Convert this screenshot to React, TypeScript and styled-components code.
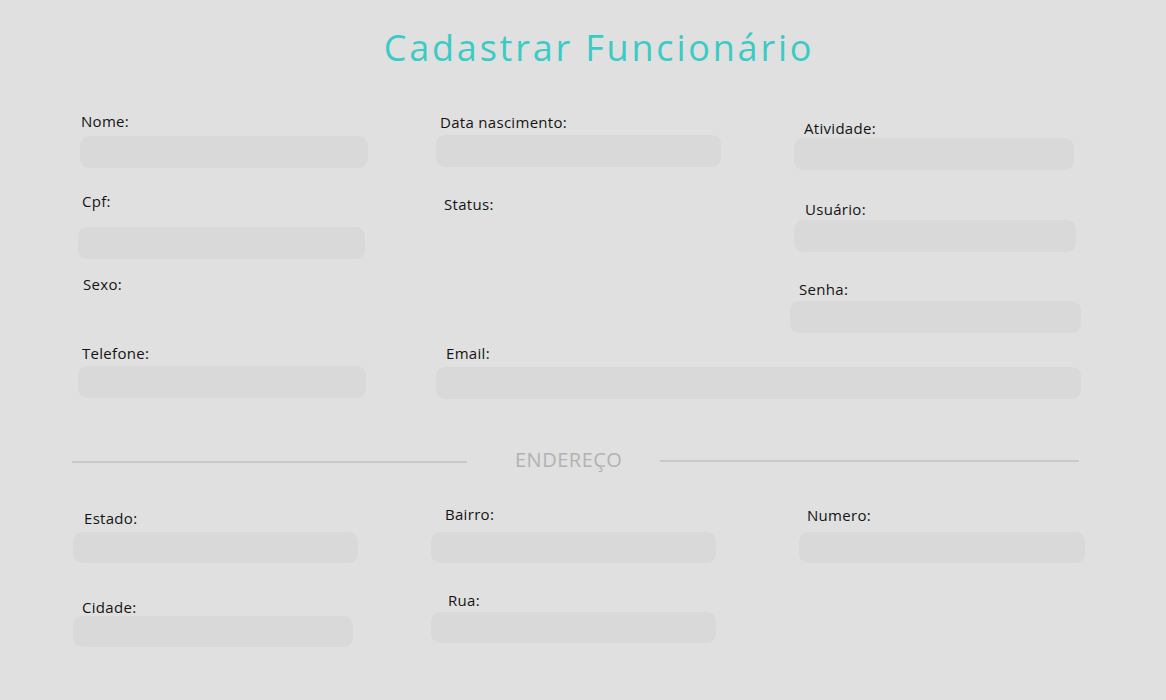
import React from "react";
import styled, { createGlobalStyle } from "styled-components";

const Global = createGlobalStyle`
  html, body { margin: 0; padding: 0; background: #e0e0e0; }
  body { font-family: "Open Sans", "Liberation Sans", sans-serif; }
  * { box-sizing: border-box; }
`;

const Page = styled.div`
  width: 1166px;
  height: 700px;
  background: #e0e0e0;
  overflow: hidden;
`;

const Header = styled.header`
  height: 113px;
  display: flex;
  justify-content: center;
  padding-left: 32px;
  padding-top: 26px;
`;

const Title = styled.h1`
  margin: 0;
  font-family: "Open Sans", sans-serif;
  font-weight: 400;
  font-size: 36px;
  line-height: 44px;
  letter-spacing: 2.8px;
  color: #3bcbc6;
`;

const Form = styled.form`
  padding-left: 72px;
  display: flex;
  flex-direction: column;
`;

const Grid = styled.div<{ $mt?: number; $h?: number }>`
  display: grid;
  grid-template-columns: 358px 356px 1fr;
  align-items: start;
  margin-top: ${(p) => p.$mt ?? 0}px;
  height: ${(p) => (p.$h ? `${p.$h}px` : "auto")};
`;

const Column = styled.div`
  display: flex;
  flex-direction: column;
  align-items: flex-start;
`;

const FieldBox = styled.div<{ $mt: number; $span?: boolean }>`
  display: flex;
  flex-direction: column;
  align-items: flex-start;
  margin-top: ${(p) => p.$mt}px;
  grid-column: ${(p) => (p.$span ? "2 / 4" : "auto")};
`;

const Label = styled.label<{ $x: number }>`
  margin-left: ${(p) => p.$x}px;
  font-size: 15px;
  line-height: 16px;
  height: 16px;
  letter-spacing: 0.3px;
  color: #141414;
  white-space: nowrap;
`;

const Input = styled.input<{ $x: number; $w: number; $gap: number; $h: number }>`
  margin-left: ${(p) => p.$x}px;
  margin-top: ${(p) => p.$gap}px;
  width: ${(p) => p.$w}px;
  height: ${(p) => p.$h}px;
  border: none;
  outline: none;
  background: #d9d9d9;
  border-radius: 9px;
  padding: 0 12px;
  font-family: inherit;
  font-size: 14px;
`;

const Divider = styled.div`
  display: flex;
  align-items: center;
  height: 24px;
  margin-top: 49px;
`;

const Line = styled.div<{ $w: number; $dy: number }>`
  width: ${(p) => p.$w}px;
  height: 2px;
  background: #c9c9c9;
  margin-top: ${(p) => p.$dy}px;
`;

const DividerText = styled.span`
  margin: 0 38px 0 48px;
  font-size: 20px;
  line-height: 24px;
  color: #b2b2b2;
  letter-spacing: 0.5px;
`;

type FieldProps = {
  label: string;
  mt: number;
  lx: number;
  ix?: number;
  w?: number;
  gap?: number;
  h?: number;
  span?: boolean;
};

const Field = ({ label, mt, lx, ix, w, gap, h = 32, span }: FieldProps) => (
  <FieldBox $mt={mt} $span={span}>
    <Label $x={lx}>{label}</Label>
    {w !== undefined && <Input $x={ix ?? 0} $w={w} $gap={gap ?? 0} $h={h} />}
  </FieldBox>
);

export default function App() {
  return (
    <Page>
      <Global />
      <Header>
        <Title>Cadastrar Funcionário</Title>
      </Header>
      <Form>
        <Grid $h={220}>
          <Column>
            <Field label="Nome:" mt={0} lx={9} ix={8} w={288} gap={7} />
            <Field label="Cpf:" mt={25} lx={10} ix={6} w={287} gap={18} />
            <Field label="Sexo:" mt={17} lx={11} />
          </Column>
          <Column>
            <Field label="Data nascimento:" mt={1} lx={10} ix={6} w={285} gap={5} />
            <Field label="Status:" mt={29} lx={14} />
          </Column>
          <Column>
            <Field label="Atividade:" mt={7} lx={18} ix={8} w={280} gap={2} />
            <Field label="Usuário:" mt={31} lx={19} ix={8} w={282} gap={3} />
            <Field label="Senha:" mt={29} lx={13} ix={4} w={291} gap={4} />
          </Column>
        </Grid>
        <Grid $mt={12}>
          <Field label="Telefone:" mt={0} lx={10} ix={6} w={288} gap={5} />
          <Field label="Email:" mt={0} lx={16} ix={6} w={645} gap={6} span />
        </Grid>
        <Divider>
          <Line $w={395} $dy={3} />
          <DividerText>ENDEREÇO</DividerText>
          <Line $w={419} $dy={1} />
        </Divider>
        <Grid $mt={34}>
          <Column>
            <Field label="Estado:" mt={4} lx={12} ix={1} w={285} gap={6} h={31} />
            <Field label="Cidade:" mt={36} lx={10} ix={1} w={280} gap={1} h={31} />
          </Column>
          <Column>
            <Field label="Bairro:" mt={0} lx={15} ix={1} w={285} gap={10} h={31} />
            <Field label="Rua:" mt={29} lx={18} ix={1} w={285} gap={4} h={31} />
          </Column>
          <Column>
            <Field label="Numero:" mt={1} lx={21} ix={13} w={286} gap={9} h={31} />
          </Column>
        </Grid>
      </Form>
    </Page>
  );
}
